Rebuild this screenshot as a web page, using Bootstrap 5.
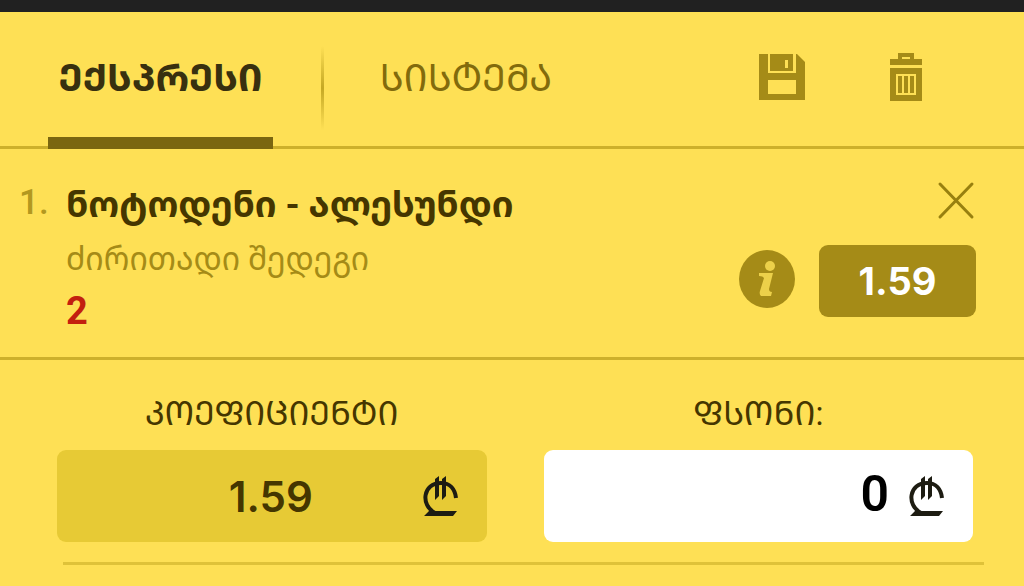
<!DOCTYPE html>
<html lang="ka">
<head>
<meta charset="utf-8">
<meta name="viewport" content="width=device-width, initial-scale=1">
<title>ᲔᲥᲡᲞᲠᲔᲡᲘ</title>
<link href="https://cdn.jsdelivr.net/npm/bootstrap@5.3.0/dist/css/bootstrap.min.css" rel="stylesheet">
<style>
  :root { --ink: #453600; --olive: #a58b17; --rule: #cdb02b; }
  body { background: #fee055; color: var(--ink); font-family: Roboto, "Noto Sans Georgian", "DejaVu Sans", sans-serif; }
  .top-strip { height: 12px; background: #212121; }
  .slip-head { height: 137px; border-bottom: 3px solid var(--rule); padding: 0 101px 0 48px; }
  .slip-tabs { height: 137px; }
  .slip-tabs .nav-link { padding: 0; height: 137px; line-height: 132px; border: 0; border-radius: 0; font-size: 38px; color: #826b0c; text-align: center; }
  .slip-tabs .nav-link.active { width: 225px; background: none; font-weight: 700; color: #38300f; border-bottom: 12px solid #7a6610; }
  .slip-tabs .nav-link.idle { width: 284px; }
  .tab-split { width: 3px; height: 84px; margin: 34px 0 0 48px; background: linear-gradient(transparent, #c5a824, transparent); }
  .head-tools { gap: 84px; padding-bottom: 4px; }
  .bare { border: 0; background: none; padding: 0; line-height: 0; color: var(--olive); }
  .pick { padding: 32px 48px 20px 19px; border-bottom: 3px solid var(--rule); }
  .pick-no { width: 47px; font-size: 35px; line-height: 44px; font-weight: 500; color: #b3981f; }
  .teams { font-size: 36px; line-height: 48px; font-weight: 700; margin: 0; }
  .market { font-size: 32px; line-height: 60px; color: var(--olive); }
  .outcome { font-size: 38px; line-height: 48px; font-weight: 700; margin-top: -2px; margin-bottom: 2px; color: #c3200f; }
  .pick-side { gap: 25px; }
  .odd-btn { width: 157px; height: 72px; border: 0; border-radius: 9px; background: var(--olive); color: #fff; font: 700 38px/66px Inter, sans-serif; }
  .stake-form { padding: 30px 51px 20px 57px; gap: 57px; }
  .stake-form label { font-size: 33px; line-height: 48px; margin-bottom: 12px; }
  .money { height: 92px; border-radius: 9px; padding: 0 28px; background: #fff; }
  .money.total { background: #e7ca35; }
  .money input { width: 0; border: 0; outline: 0; padding: 0 4px 4px 0; background: none; font: 600 50px/60px Roboto, sans-serif; color: #000; }
  .money.total input { font-family: Inter, sans-serif; font-size: 42px; padding: 2px 0 0 34px; color: var(--ink); }
  .end-rule { height: 3px; margin: 0 40px 0 63px; background: #dfc239; }
</style>
</head>
<body>
<div class="top-strip"></div>
<header class="slip-head d-flex justify-content-between">
  <nav class="slip-tabs nav flex-nowrap">
    <a class="nav-link active" href="#express">ᲔᲥᲡᲞᲠᲔᲡᲘ</a>
    <span class="tab-split"></span>
    <a class="nav-link idle" href="#system">ᲡᲘᲡᲢᲔᲛᲐ</a>
  </nav>
  <div class="head-tools d-flex align-items-center">
    <button class="bare" type="button" aria-label="შენახვა">
      <svg width="46" height="46" viewBox="0 0 46 46" fill="currentColor"><path d="M0 0h9v19h28V0h1l8 8v38H0z M9 26v14h28V26z" fill-rule="evenodd"/><path fill-rule="evenodd" d="M11 0h23v17H11zM26 6v8h3V6z"/></svg>
    </button>
    <button class="bare" type="button" aria-label="წაშლა">
      <svg width="34" height="50" viewBox="0 0 34 50" fill="currentColor"><path fill-rule="evenodd" d="M1 7h8V1h16v6h8v6H1zM13 5v2h8V5z"/><path fill-rule="evenodd" d="M1 16h32v33H1zM7 22v21h20V22z"/><path d="M9 24h4v17H9zM15 24h4v17h-4zM21 24h4v17h-4z"/></svg>
    </button>
  </div>
</header>
<main>
  <section class="pick d-flex">
    <div class="pick-no">1.</div>
    <div class="flex-grow-1">
      <h1 class="teams">ნოტოდენი - ალესუნდი</h1>
      <div class="market">ძირითადი შედეგი</div>
      <div class="outcome">2</div>
    </div>
    <div class="pick-side d-flex flex-column align-items-end">
      <button class="bare" type="button" aria-label="დახურვა">
        <svg width="39" height="39" viewBox="0 0 39 39" stroke="#98800f" stroke-width="3" stroke-linecap="round"><path d="M3 3l32 33M35 3L3 36"/></svg>
      </button>
      <div class="d-flex align-items-start">
        <button class="bare mt-1 me-4" type="button" aria-label="ინფორმაცია">
          <svg width="56" height="60" viewBox="0 0 56 60"><ellipse cx="28" cy="30" rx="28" ry="29" fill="currentColor"/><g fill="#ecd04a"><circle cx="31" cy="17" r="5"/><path d="M20 24h14l-4 16q0 3 3 3l-1 4H22q-2-2-1-5l4-13q-1-2-5-2z"/></g></svg>
        </button>
        <button class="odd-btn p-0" type="button">1.59</button>
      </div>
    </div>
  </section>
  <form class="stake-form d-flex">
    <div class="flex-fill w-50 d-flex flex-column">
      <label class="text-center" for="coef">ᲙᲝᲔᲤᲘᲪᲘᲔᲜᲢᲘ</label>
      <div class="money total d-flex align-items-center">
        <input class="flex-grow-1 text-center" id="coef" value="1.59" readonly>
        <svg width="36" height="42" viewBox="0 0 36 42"><use href="#lari"/></svg>
      </div>
    </div>
    <div class="flex-fill w-50 d-flex flex-column">
      <label class="text-center" for="stake">ᲤᲡᲝᲜᲘ:</label>
      <div class="money d-flex align-items-center">
        <input class="flex-grow-1 text-end me-3" id="stake" value="0" inputmode="decimal">
        <svg width="36" height="42" viewBox="0 0 36 42"><g id="lari"><path d="M12 38C-3 30 0 8 18 8C27 8 32 14 33 23" fill="none" stroke="#1d1c12" stroke-width="4"/><path d="M12 4l4-3v20l-4 4zM19 4l4-3v20l-4 4zM6 36h28l-4 5H1z" fill="#1d1c12"/></g></svg>
      </div>
    </div>
  </form>
  <div class="end-rule"></div>
</main>
<script src="https://cdn.jsdelivr.net/npm/bootstrap@5.3.0/dist/js/bootstrap.bundle.min.js"></script>
</body>
</html>
